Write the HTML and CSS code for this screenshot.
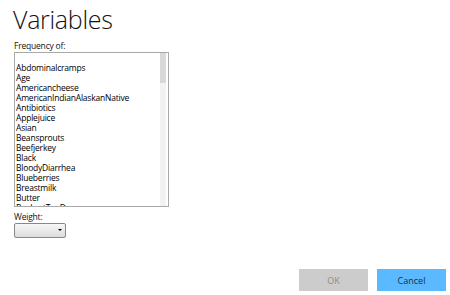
FILE: index.html
```html
<!DOCTYPE html>
<html>
<head>
<meta charset="utf-8">
<link rel="stylesheet" href="styles.css">
</head>
<body>
<div class="dialog">
  <h1 class="title">Variables</h1>
  <div class="field">
    <div class="label">Frequency of:</div>
    <div class="listbox">
      <div class="items">
        <div class="item">&nbsp;</div>
        <div class="item">Abdominalcramps</div>
        <div class="item">Age</div>
        <div class="item">Americancheese</div>
        <div class="item">AmericanIndianAlaskanNative</div>
        <div class="item">Antibiotics</div>
        <div class="item">Applejuice</div>
        <div class="item">Asian</div>
        <div class="item">Beansprouts</div>
        <div class="item">Beefjerkey</div>
        <div class="item">Black</div>
        <div class="item">BloodyDiarrhea</div>
        <div class="item">Blueberries</div>
        <div class="item">Breastmilk</div>
        <div class="item">Butter</div>
        <div class="item">BuyLastTenDays</div>
      </div>
      <div class="scrollbar"><div class="thumb"></div></div>
    </div>
  </div>
  <div class="field weight">
    <div class="label">Weight:</div>
    <div class="select"><span class="arrow"></span></div>
  </div>
  <div class="buttons">
    <button class="btn ok">OK</button>
    <button class="btn cancel">Cancel</button>
  </div>
</div>
</body>
</html>
```
FILE: styles.css
```css
html, body {
  margin: 0;
  padding: 0;
  background: #fff;
}
body {
  width: 450px;
  height: 295px;
  overflow: hidden;
  font-family: "Open Sans", "Noto Sans", sans-serif;
  color: #000;
}
.dialog {
  display: flex;
  flex-direction: column;
  padding: 0 4px 0 14px;
  height: 295px;
  box-sizing: border-box;
}
.title {
  margin: 0;
  padding-top: 3px;
  font-weight: 300;
  font-size: 25px;
  letter-spacing: -0.3px;
  line-height: 32px;
  height: 37px;
  color: #111;
  margin-left: -1px;
}
.label {
  font-size: 8.5px;
  letter-spacing: -0.2px;
  line-height: 11px;
  height: 11px;
  color: #111;
}
.field:first-of-type .label {
  height: 12px;
  line-height: 12px;
}
.listbox {
  width: 155px;
  height: 155px;
  box-sizing: border-box;
  border: 1px solid #a9a9a9;
  display: flex;
  overflow: hidden;
}
.items {
  flex: 1;
  padding: 0 0 0 1px;
  font-size: 8.5px;
  letter-spacing: -0.2px;
  line-height: 10px;
}
.item {
  white-space: nowrap;
  height: 10px;
}
.scrollbar {
  width: 6px;
  margin: 0 2px 0 0;
  background: #f2f2f2;
}
.thumb {
  height: 30px;
  background: #d8d8d8;
}
.weight {
  margin-top: 4px;
}
.select {
  margin-top: 1px;
  width: 52px;
  height: 15px;
  box-sizing: border-box;
  border: 1px solid #888;
  border-radius: 2px;
  background: linear-gradient(#f7f7f7, #dcdcdc);
  position: relative;
}
.arrow {
  position: absolute;
  right: 3px;
  top: 5px;
  width: 0;
  height: 0;
  border-left: 2px solid transparent;
  border-right: 2px solid transparent;
  border-top: 2px solid #000;
}
.buttons {
  margin-top: auto;
  margin-bottom: 4px;
  display: flex;
  justify-content: flex-end;
  gap: 9px;
}
.btn {
  width: 69px;
  height: 22px;
  border: 0;
  font-family: "Open Sans", sans-serif;
  font-size: 9px;
  padding: 0;
}
.ok {
  background: #cccccc;
  color: #8c8c8c;
}
.cancel {
  background: #5ab9ff;
  color: #15304d;
}
```
